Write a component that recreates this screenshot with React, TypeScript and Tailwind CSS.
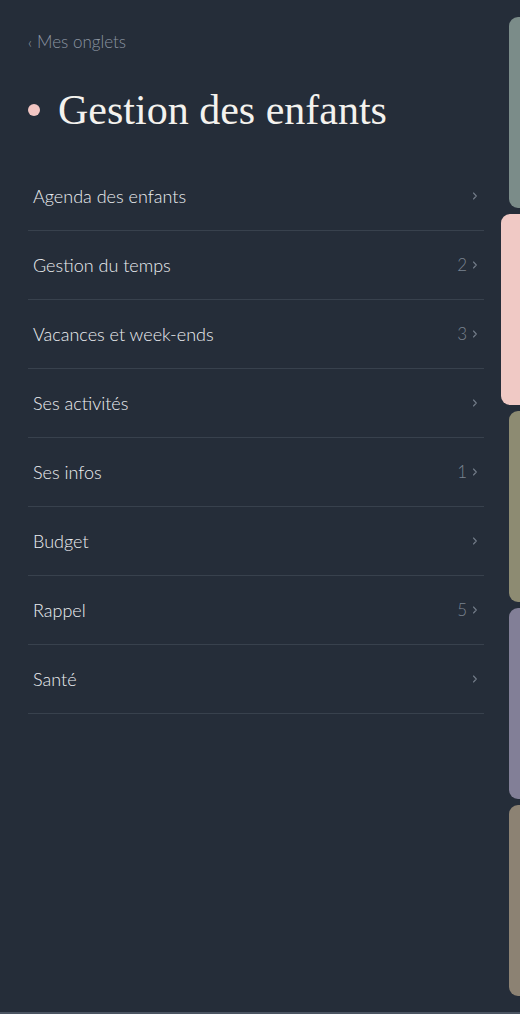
import React from 'react'

type Row = { label: string; count?: number }

const rows: Row[] = [
  { label: 'Agenda des enfants' },
  { label: 'Gestion du temps', count: 2 },
  { label: 'Vacances et week-ends', count: 3 },
  { label: 'Ses activités' },
  { label: 'Ses infos', count: 1 },
  { label: 'Budget' },
  { label: 'Rappel', count: 5 },
  { label: 'Santé' },
]

// side tabs, the pink one is the active (wider) one
const tabs = [
  { color: 'bg-[#7b8c89]', active: false },
  { color: 'bg-[#f0c9c5]', active: true },
  { color: 'bg-[#8d8b72]', active: false },
  { color: 'bg-[#827f97]', active: false },
  { color: 'bg-[#8c8273]', active: false },
]

function Chevron() {
  return (
    <svg width="6" height="10" viewBox="0 0 6 10" fill="none" className="text-[#737c89]">
      <path d="M1.5 2 4.3 5 1.5 8" stroke="currentColor" strokeWidth="1.1" strokeLinecap="round" strokeLinejoin="round" />
    </svg>
  )
}

export default function App() {
  return (
    <div
      className="h-[1014px] w-full bg-[#252d39] flex border-b-2 border-[#4b5462] overflow-hidden"
      style={{ fontFamily: 'Lato, "Noto Sans", sans-serif' }}
    >
      <div className="flex-1 pl-[28px] pr-[17px]">
        <div className="pt-[31px] flex items-center gap-[5px] text-[#8a93a0] text-[17px] font-light leading-[22px]">
          <span className="text-[15px]">‹</span>
          <span>Mes onglets</span>
        </div>

        <div className="mt-[35px] flex items-center gap-[18px] h-[44px]">
          <span className="w-[12px] h-[12px] rounded-full bg-[#f2c6c3] shrink-0" />
          <h1
            className="text-[42px] leading-none text-[#f4f2ee]"
            style={{ fontFamily: '"Liberation Serif", "DejaVu Serif", serif' }}
          >
            Gestion des enfants
          </h1>
        </div>

        <ul className="mt-[30px]">
          {rows.map((r) => (
            <li
              key={r.label}
              className="h-[69px] flex items-center justify-between border-b-[1.5px] border-[#38414d] pl-[5px] pr-[6px]"
            >
              <span className="text-[18px] font-light text-[#eceef1]">{r.label}</span>
              <span className="flex items-center gap-[5px] text-[17px] font-light text-[#7a8390]">
                {r.count !== undefined && <span>{r.count}</span>}
                <Chevron />
              </span>
            </li>
          ))}
        </ul>
      </div>

      <div className="w-[19px] pt-[17px] flex flex-col items-end gap-[6px]">
        {tabs.map((t, i) => (
          <div
            key={i}
            className={`${t.color} h-[191px] rounded-l-[9px] ${t.active ? 'w-[19px]' : 'w-[11px]'}`}
          />
        ))}
      </div>
    </div>
  )
}
